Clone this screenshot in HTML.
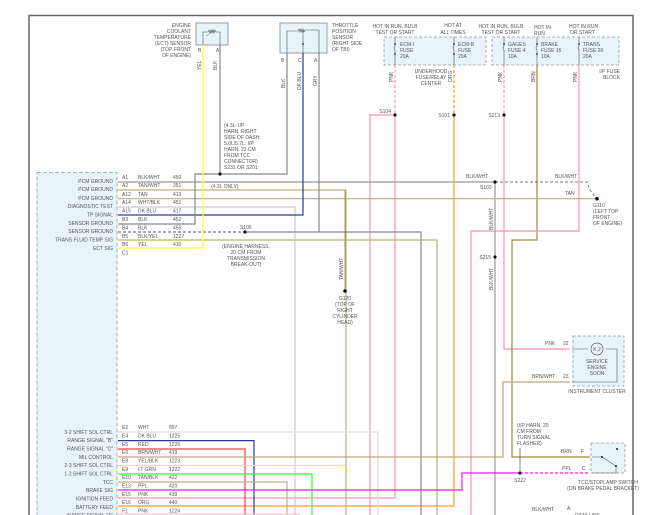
<!DOCTYPE html>
<html><head><meta charset="utf-8"><style>
html,body{margin:0;padding:0;background:#fff;width:650px;height:515px;overflow:hidden}
svg{display:block}
text{font-family:"Liberation Sans",sans-serif;font-size:5px;fill:#555}
.r{text-anchor:end}
.m{text-anchor:middle}
</style></head><body>
<svg width="650" height="515" viewBox="0 0 650 515" xmlns="http://www.w3.org/2000/svg">
<rect width="650" height="515" fill="#fff"/>
<!-- outer frame -->
<path d="M29 515V15.5H633V515" fill="none" stroke="#666" stroke-width="1.5"/>
<!-- PCM box -->
<rect x="37" y="172.5" width="80" height="350" fill="#e8f4fc" stroke="#999" stroke-width="0.8" stroke-dasharray="4,2"/>

<!-- ECT sensor -->
<rect x="196" y="23" width="32" height="22" fill="#e8f4fc" stroke="#888" stroke-width="0.8"/>
<path d="M203 45V32H208l1-2 1 3 1-3 1 3 1-3 1 3 1-3 1 2H220V45" fill="none" stroke="#555" stroke-width="0.6"/>
<path d="M206 36l8-6" stroke="#555" stroke-width="0.5"/>
<text x="198" y="52" font-size="4">B</text><text x="216" y="52" font-size="4">A</text>
<text class="r" x="191" y="27">ENGINE</text><text class="r" x="191" y="33">COOLANT</text><text class="r" x="191" y="39">TEMPERATURE</text><text class="r" x="191" y="45">(ECT) SENSOR</text><text class="r" x="191" y="51">(TOP FRONT</text><text class="r" x="191" y="57">OF ENGINE)</text>
<text transform="translate(201,70) rotate(-90)">YEL</text>
<text transform="translate(217,70) rotate(-90)">BLK</text>

<!-- TPS -->
<rect x="280" y="23" width="47" height="30" fill="#e8f4fc" stroke="#888" stroke-width="0.8"/>
<path d="M287 53V31H298l1-2 1 3 1-3 1 3 1-3 1 3 1-2H319V53M303 31V53" fill="none" stroke="#555" stroke-width="0.6"/>
<circle cx="303" cy="44" r="0.9" fill="#222"/>
<text x="281" y="62" font-size="4">B</text><text x="298" y="62" font-size="4">C</text><text x="314" y="62" font-size="4">A</text>
<text x="332" y="27">THROTTLE</text><text x="332" y="33">POSITION</text><text x="332" y="39">SENSOR</text><text x="332" y="45">(RIGHT SIDE</text><text x="332" y="51">OF TBI)</text>
<text transform="translate(285,88) rotate(-90)">BLK</text>
<text transform="translate(301,90) rotate(-90)">DK BLU</text>
<text transform="translate(317,86) rotate(-90)">GRY</text>

<!-- Fuse boxes -->
<rect x="384" y="37" width="102" height="28" fill="#e8f4fc" stroke="#999" stroke-width="0.8" stroke-dasharray="3,2"/>
<rect x="492" y="37" width="127" height="28" fill="#e8f4fc" stroke="#999" stroke-width="0.8" stroke-dasharray="3,2"/>
<g stroke="#555" stroke-width="0.6" fill="none">
<path d="M395 37V46q-2 2 0 4V65M454 37V46q-2 2 0 4V65M504 37V46q-2 2 0 4V65M537 37V46q-2 2 0 4V65M579 37V46q-2 2 0 4V65"/></g>
<g fill="#222"><circle cx="395" cy="44" r="0.9"/><circle cx="395" cy="54" r="0.9"/><circle cx="454" cy="44" r="0.9"/><circle cx="454" cy="54" r="0.9"/><circle cx="504" cy="44" r="0.9"/><circle cx="537" cy="44" r="0.9"/><circle cx="537" cy="54" r="0.9"/><circle cx="579" cy="44" r="0.9"/></g>
<text class="m" x="395" y="28">HOT IN RUN, BULB</text><text class="m" x="395" y="34">TEST OR START</text>
<text class="m" x="453" y="27">HOT AT</text><text class="m" x="453" y="34">ALL TIMES</text>
<text class="m" x="501" y="28">HOT IN RUN, BULB</text><text class="m" x="501" y="34">TEST OR START</text>
<text x="534" y="29">HOT IN</text><text x="534" y="35">RUN</text>
<text x="569" y="28">HOT IN RUN</text><text x="570" y="34">OR START</text>
<text x="400" y="46">ECM-I</text><text x="400" y="52">FUSE</text><text x="400" y="58">20A</text>
<text x="458" y="46">ECM-B</text><text x="458" y="52">FUSE</text><text x="458" y="58">20A</text>
<text x="508" y="46">GAGES</text><text x="508" y="52">FUSE 4</text><text x="508" y="58">10A</text>
<text x="541" y="46">BRAKE</text><text x="541" y="52">FUSE 16</text><text x="541" y="58">10A</text>
<text x="583" y="46">TRANS</text><text x="583" y="52">FUSE 20</text><text x="583" y="58">20A</text>
<text class="m" x="431" y="73">UNDERHOOD</text><text class="m" x="431" y="79">FUSE/RELAY</text><text class="m" x="431" y="85">CENTER</text>
<text class="r" x="620" y="73">I/P FUSE</text><text class="r" x="620" y="79">BLOCK</text>
<text transform="translate(393,82) rotate(-90)" font-size="4">PNK</text>
<text transform="translate(452,82) rotate(-90)" font-size="4">ORG</text>
<text transform="translate(502,82) rotate(-90)" font-size="4">PNK</text>
<text transform="translate(535,82) rotate(-90)" font-size="4">BRN</text>
<text transform="translate(577,82) rotate(-90)" font-size="4">PNK</text>

<!-- wires -->
<g fill="none" stroke-width="1.2">
<!-- pink ECM-I -->
<path d="M395 65V115" stroke="#ff8fb5" stroke-dasharray="3,2"/>
<path d="M395 115V498H118M370 515V115H395" stroke="#ff8fb5"/>
<!-- orange ECM-B -->
<path d="M454 65V115" stroke="#ff9a20" stroke-dasharray="3,2"/>
<path d="M454 115V506H118" stroke="#ff9a20"/>
<!-- gages pink -->
<path d="M504 65V115" stroke="#ff8fb5" stroke-dasharray="3,2"/>
<path d="M504 115V349H570" stroke="#ff8fb5"/>
<!-- brake brown -->
<path d="M537 65V240H512V457H590" stroke="#9c8a3c"/>
<!-- trans pink -->
<path d="M579 65V231H471V515" stroke="#ff8fb5"/>
<!-- A1 BLK/WHT -->
<path d="M118 182H495" stroke="#999"/>
<path d="M495 182H587l3 8 6 8" stroke="#777" stroke-dasharray="3,2" stroke-width="0.9"/>
<path d="M495 182V515" stroke="#999"/>
<!-- A2 TAN/WHT -->
<path d="M118 190H346V515" stroke="#bcb07a"/>
<!-- A12 TAN -->
<path d="M118 198.7H597" stroke="#bcb07a"/>
<!-- A14 WHT/BLK -->
<path d="M118 207H295V515" stroke="#ccc"/>
<!-- A15 DK BLU -->
<path d="M118 215H303V53" stroke="#2a3a9a"/>
<!-- B3 BLK -->
<path d="M118 224H195V174H287V53M220 174V45" stroke="#888"/>
<!-- B4 -->
<path d="M118 232H245" stroke="#777" stroke-dasharray="3,2"/>
<path d="M245 232H421V515M319 53V232" stroke="#888"/>
<!-- B5 -->
<path d="M118 240H437V515" stroke="#bcb07a"/>
<!-- B6 YEL -->
<path d="M118 248H203V45" stroke="#ffff30"/>
<!-- G120 -->
<path d="M345 190V290" stroke="#9c8a3c" stroke-width="0.9"/>
<!-- E rows -->
<path d="M118 432H378V515" stroke="#ddd"/>
<path d="M118 440.6H254V515" stroke="#2a3a9a"/>
<path d="M118 449H245V515" stroke="#ff3a3a"/>
<path d="M118 457H503V382H570" stroke="#bca87a"/>
<path d="M118 465.5H346" stroke="#eeee40"/>
<path d="M118 474H312V515" stroke="#33ff33"/>
<path d="M118 482H287V515" stroke="#bcb07a"/>
<path d="M118 490H462V473H520" stroke="#ff10ff"/>
<path d="M520 473H590" stroke="#ff10ff" stroke-dasharray="3,2"/>
<path d="M118 514H300" stroke="#ffc0d5"/>
</g>
<g fill="#111">
<circle cx="395" cy="115" r="1.6"/><circle cx="454" cy="115" r="1.6"/><circle cx="504" cy="115" r="1.6"/>
<circle cx="495" cy="182" r="1.6"/><circle cx="495" cy="257" r="1.6"/><circle cx="220" cy="174" r="1.6"/>
<circle cx="245" cy="232" r="1.6"/><circle cx="345" cy="291" r="1.8"/><circle cx="597" cy="198.7" r="1.8"/><circle cx="520" cy="473" r="1.6"/>
</g>
<text class="r" x="391" y="113">S104</text><text class="r" x="450" y="117">S101</text><text class="r" x="500" y="117">S213</text>
<text x="466" y="178">BLK/WHT</text><text x="555" y="178">BLK/WHT</text><text x="565" y="195">TAN</text>
<text x="480" y="189">S103</text><text class="r" x="491" y="259">S215</text>
<text x="593" y="207">G110</text><text x="593" y="213">(LEFT TOP</text><text x="593" y="219">FRONT</text><text x="593" y="225">OF ENGINE)</text>
<text transform="translate(493,230) rotate(-90)" font-size="4">BLK/WHT</text>
<text transform="translate(493,290) rotate(-90)" font-size="4">BLK/WHT</text>
<text transform="translate(343,280) rotate(-90)" font-size="4">TAN/WHT</text>
<text class="m" x="345" y="300">G120</text><text class="m" x="345" y="306">(TOP OF</text><text class="m" x="345" y="312">RIGHT</text><text class="m" x="345" y="318">CYLINDER</text><text class="m" x="345" y="324">HEAD)</text>
<text x="224" y="127">(4.3L: I/P</text><text x="224" y="133">HARN, RIGHT</text><text x="224" y="139">SIDE OF DASH;</text><text x="224" y="145">5.0L/5.7L: I/P</text><text x="224" y="151">HARN, 23 CM</text><text x="224" y="157">FROM TCC</text><text x="224" y="163">CONNECTOR)</text><text x="224" y="169">S231 OR S201</text>
<text x="211" y="188">(4.3L ONLY)</text>
<text x="240" y="229">S106</text>
<text class="m" x="246" y="248">(ENGINE HARNESS,</text><text class="m" x="246" y="254">20 CM FROM</text><text class="m" x="246" y="260">TRANSMISSION</text><text class="m" x="246" y="266">BREAK-OUT)</text>

<!-- PCM pin labels -->
<g>
<text class="r" x="113" y="183">PCM GROUND</text><text class="r" x="113" y="191">PCM GROUND</text><text class="r" x="113" y="200">PCM GROUND</text><text class="r" x="113" y="208">DIAGNOSTIC TEST</text><text class="r" x="113" y="216.5">TP SIGNAL</text><text class="r" x="113" y="225">SENSOR GROUND</text><text class="r" x="113" y="233">SENSOR GROUND</text><text class="r" x="113" y="241.5">TRANS FLUID TEMP SIG</text><text class="r" x="113" y="250">ECT SIG</text>
<text x="122" y="179" fill="#222">A1</text><text x="122" y="187">A2</text><text x="122" y="196">A12</text><text x="122" y="204">A14</text><text x="122" y="212.5">A15</text><text x="122" y="221">B3</text><text x="122" y="229.5">B4</text><text x="122" y="238">B5</text><text x="122" y="246">B6</text><text x="122" y="254.5">C1</text>
<text x="138" y="179" fill="#222">BLK/WHT</text><text x="138" y="187">TAN/WHT</text><text x="138" y="196">TAN</text><text x="138" y="204">WHT/BLK</text><text x="138" y="212.5">DK BLU</text><text x="138" y="221">BLK</text><text x="138" y="229.5">BLK</text><text x="138" y="238">BLK/YEL</text><text x="138" y="246">YEL</text>
<text x="173" y="179" fill="#222">450</text><text x="173" y="187">351</text><text x="173" y="196">413</text><text x="173" y="204">451</text><text x="173" y="212.5">417</text><text x="173" y="221">452</text><text x="173" y="229.5">455</text><text x="173" y="238">1227</text><text x="173" y="246">410</text>
</g>
<g>
<text class="r" x="113" y="434">3-2 SHIFT SOL CTRL</text><text class="r" x="113" y="442">RANGE SIGNAL "B"</text><text class="r" x="113" y="450.5">RANGE SIGNAL "C"</text><text class="r" x="113" y="459">MIL CONTROL</text><text class="r" x="113" y="467">2-3 SHIFT SOL CTRL</text><text class="r" x="113" y="475.5">1-2 SHIFT SOL CTRL</text><text class="r" x="113" y="484">TCC</text><text class="r" x="113" y="492">BRAKE SIG</text><text class="r" x="113" y="500.5">IGNITION FEED</text><text class="r" x="113" y="509">BATTERY FEED</text><text class="r" x="113" y="517">RANGE SIGNAL "A"</text>
<text x="122" y="429">E2</text><text x="122" y="437.5">E4</text><text x="122" y="446">E5</text><text x="122" y="454">E6</text><text x="122" y="462.5">E8</text><text x="122" y="471">E9</text><text x="122" y="479">E10</text><text x="122" y="487.5">E13</text><text x="122" y="496">E15</text><text x="122" y="504">E16</text><text x="122" y="512.5">F1</text>
<text x="138" y="429">WHT</text><text x="138" y="437.5">DK BLU</text><text x="138" y="446">RED</text><text x="138" y="454">BRN/WHT</text><text x="138" y="462.5">YEL/BLK</text><text x="138" y="471">LT GRN</text><text x="138" y="479">TAN/BLK</text><text x="138" y="487.5">PPL</text><text x="138" y="496">PNK</text><text x="138" y="504">ORG</text><text x="138" y="512.5">PNK</text>
<text x="169" y="429">897</text><text x="169" y="437.5">1225</text><text x="169" y="446">1226</text><text x="169" y="454">419</text><text x="169" y="462.5">1223</text><text x="169" y="471">1222</text><text x="169" y="479">422</text><text x="169" y="487.5">420</text><text x="169" y="496">439</text><text x="169" y="504">440</text><text x="169" y="512.5">1224</text>
</g>

<!-- instrument cluster -->
<rect x="573" y="336" width="51" height="50" fill="#e8f4fc" stroke="#999" stroke-width="0.8" stroke-dasharray="3,2"/>
<path d="M572 349H588M606 349H617V382H572" fill="none" stroke="#555" stroke-width="0.6"/>
<circle cx="597" cy="349" r="6" fill="none" stroke="#555" stroke-width="0.7"/>
<text class="m" x="597" y="351" font-size="4">K,2</text>
<text class="m" x="597" y="363">SERVICE</text><text class="m" x="597" y="369">ENGINE</text><text class="m" x="597" y="375">SOON</text>
<text class="m" x="597" y="393">INSTRUMENT CLUSTER</text>
<text x="545" y="345">PNK</text><text x="563" y="345">22</text>
<text x="532" y="378">BRN/WHT</text><text x="563" y="378">23</text>
<!-- TCC switch -->
<rect x="591" y="443" width="34" height="30" fill="#e8f4fc" stroke="#999" stroke-width="0.8" stroke-dasharray="3,2"/>
<path d="M592 457H602l14 9V473H592" fill="none" stroke="#555" stroke-width="0.6"/>
<circle cx="602" cy="457" r="1" fill="#222"/><circle cx="616" cy="466" r="1" fill="#222"/><circle cx="617" cy="449" r="1" fill="#222"/>
<text x="561" y="453">BRN</text><text x="581" y="453">F</text>
<text x="562" y="470">PPL</text><text x="582" y="470">C</text>
<text class="m" x="608" y="484">TCC/STOPLAMP SWITCH</text><text class="m" x="603" y="490">(ON BRAKE PEDAL BRACKET)</text>
<text x="517" y="427">(I/P HARN, 20</text><text x="517" y="433">CM FROM</text><text x="517" y="439">TURN SIGNAL</text><text x="517" y="445">FLASHER)</text>
<path d="M520 448V471" stroke="#333" stroke-width="0.6"/>
<text class="m" x="520" y="482">S222</text>
<text x="532" y="511">BLK/WHT</text><text x="567" y="510">A</text><text x="575" y="517">DATA LINK</text>
</svg>
</body></html>
